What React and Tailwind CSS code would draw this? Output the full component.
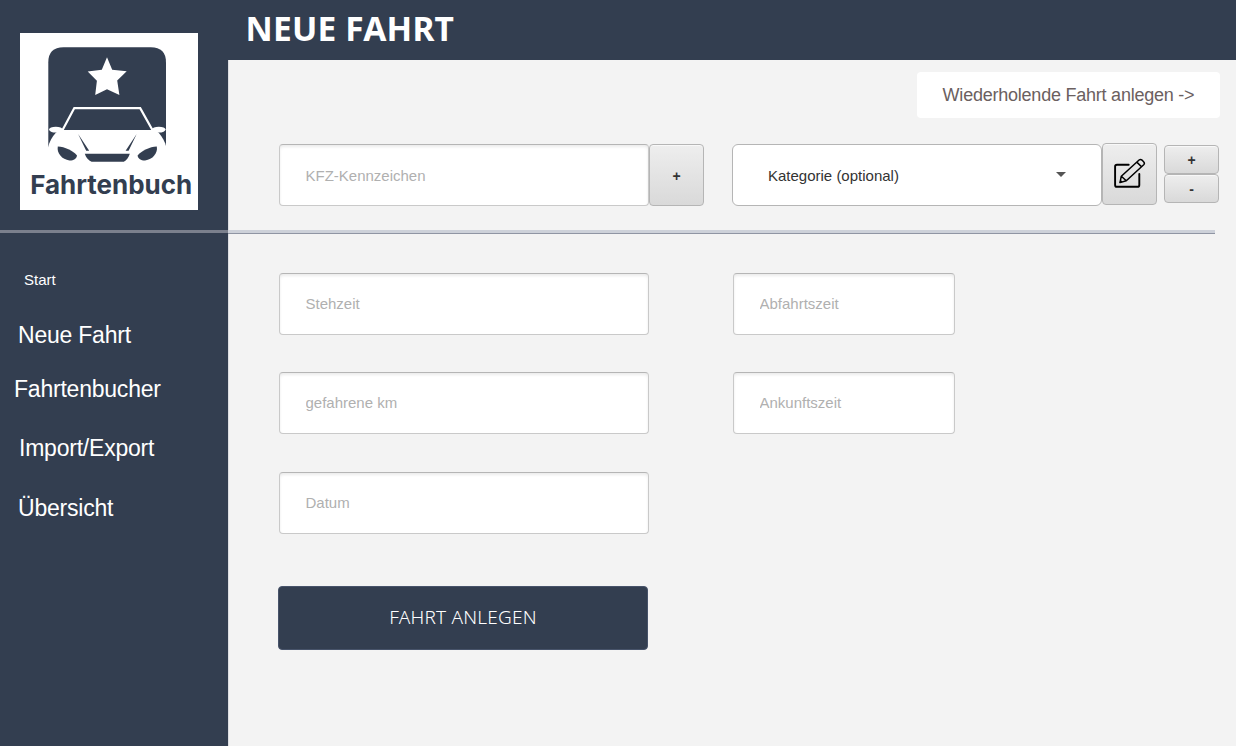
const NAVY = '#333e50';

function Logo() {
  return (
    <svg width="178" height="177" viewBox="0 0 178 177" className="block bg-white" role="img" aria-label="Fahrtenbuch">
      <path d="M28.3 116V29.5Q28.3 14.3 43.5 14.3H130.8Q146 14.3 146 29.5V116Z" fill={NAVY} />
      <path d="M87 24.3 92.2 36.8 106.7 38.2 97.2 47.4 99.4 61.9 87 56.2 75.2 61.9 76.9 47.7 67.7 38.4 81.8 36.8Z" fill="#fff" />
      <path d="M42.3 97.5 54.3 75.1H120.2L132.7 97.5" fill="none" stroke="#fff" strokeWidth="2.2" />
      <ellipse cx="35.8" cy="96.6" rx="6.8" ry="2.9" fill="#fff" />
      <ellipse cx="138.8" cy="96.6" rx="6.8" ry="2.9" fill="#fff" />
      <path d="M28 114.5C29.5 108.5 32 104 35.8 99.8L40 97H134.5L138.7 99.8C142.3 104 145 108.5 146.5 114.5V140H28Z" fill="#fff" />
      <path d="M58.1 101 69.2 117.8H66.2ZM116.7 101 105.6 117.8H108.6Z" fill={NAVY} />
      <path d="M37.8 113.6C45 114 52.5 117.5 57 122.5C56.5 126 53.5 127.6 49.5 127.5C42 126.8 36.5 120 37.8 113.6Z" fill={NAVY} />
      <path d="M136.8 113.6C129.6 114 122.1 117.5 117.6 122.5C118.1 126 121.1 127.6 125.1 127.5C132.6 126.8 138.1 120 136.8 113.6Z" fill={NAVY} />
      <path d="M64.8 120.8H109.8C108.5 125 106.5 127.5 103.8 128.8H71.6C68.5 127.5 66 125 64.8 120.8Z" fill={NAVY} />
      <text x="10.2" y="160.8" textLength="162" lengthAdjust="spacingAndGlyphs" fill={NAVY} className="font-['Inter'] text-[26px] font-bold">
        Fahrtenbuch
      </text>
    </svg>
  );
}

function EditIcon() {
  return (
    <svg width="33" height="32" viewBox="0 0 33 32" fill="none" stroke="#000" className="block">
      <path d="M15.7 6.7H4Q2.1 6.7 2.1 8.6V26.9Q2.1 28.8 4 28.8H24.3Q26.3 28.8 26.3 26.9V16" strokeWidth="1.9" strokeLinecap="round" />
      <path d="M7 24.6 8.3 18.2 26.1 2Q27.6.8 29 2.1L30.8 4Q32 5.4 30.7 6.7L13.3 22.8ZM8.3 18.2 13.3 22.8M23.8 4.1 28.5 8.8" strokeWidth="1.5" strokeLinejoin="round" />
      <path d="M6.5 25 7.4 21.8 9.8 24Z" fill="#000" stroke="none" />
    </svg>
  );
}

function Field({ label, className }) {
  return (
    <input
      aria-label={label}
      placeholder={label}
      className={`h-[62px] rounded-[4px] border border-[#c9c9c9] border-t-[#b5b5b5] bg-white px-[25.5px] text-[15px] text-[#333] shadow-[inset_0_2px_3px_rgba(0,0,0,0.08)] outline-none placeholder:text-[#b0b0b0] ${className}`}
    />
  );
}

function GrayButton({ children, className, label }) {
  return (
    <button
      aria-label={label}
      className={`flex items-center justify-center rounded-[4px] border border-[#b5b5b5] bg-linear-to-b from-[#eeeeee] to-[#d9d9d9] text-[14px] font-bold leading-none text-[#333] shadow-[inset_0_1px_0_#f8f8f8] ${className}`}
    >
      {children}
    </button>
  );
}

export default function App() {
  return (
    <div className="flex h-[746px] w-[1236px] overflow-hidden bg-[#f3f3f3] font-['Liberation_Sans',sans-serif]">
      <aside className="flex w-[228px] shrink-0 flex-col bg-[#333e50] text-white">
        <div className="h-[230px] pl-5 pt-[33px]">
          <Logo />
        </div>
        <div className="h-[3px] bg-[#7b808d]" />
        <nav className="flex flex-col items-start whitespace-nowrap text-[23px] leading-[28px] tracking-[-0.22px]">
          <a className="ml-6 mt-[37px] text-[15px] leading-5 tracking-normal">Start</a>
          <a className="ml-[18px] mt-[31px]">Neue Fahrt</a>
          <a className="ml-[14px] mt-[26px]">Fahrtenbucher</a>
          <a className="ml-[19px] mt-[31px]">Import/Export</a>
          <a className="ml-[18px] mt-[32px]">Übersicht</a>
        </nav>
      </aside>

      <main className="flex grow flex-col">
        <header className="h-[60px] bg-[#333e50] pl-[17.5px] pt-[6px]">
          <h1 className="font-['Noto_Sans',sans-serif] text-[33.5px] font-bold leading-[44px] tracking-[0.2px] text-white">NEUE FAHRT</h1>
        </header>

        <section className="flex h-[170px] flex-col border-l border-[#dcdee2]">
          <div className="flex justify-end pr-4 pt-3">
            <button className="h-[46px] w-[303px] whitespace-nowrap rounded-[4px] bg-white text-[18px] tracking-[-0.23px] text-[#6b6060]">
              Wiederholende Fahrt anlegen -&gt;
            </button>
          </div>
          <div className="flex items-start pl-[50px] pt-[26px]">
            <Field label="KFZ-Kennzeichen" className="w-[370px]" />
            <GrayButton className="h-[62px] w-[55px] pt-px">+</GrayButton>
            <button className="ml-[28px] flex h-[62px] w-[370px] items-center justify-between rounded-[6px] border border-[#b5b5b5] bg-white pl-[35px] pr-[35px] pt-[2px] text-[15px] text-[#333]">
              Kategorie (optional)
              <svg width="10" height="5" viewBox="0 0 10 5" className="mb-[3px]">
                <path d="M0 0H10L5 5Z" fill="#555" />
              </svg>
            </button>
            <GrayButton label="Kategorie bearbeiten" className="-mt-px h-[62px] w-[55px]">
              <EditIcon />
            </GrayButton>
            <div className="ml-[7px] mt-px flex flex-col">
              <GrayButton className="h-[29px] w-[55px]">+</GrayButton>
              <GrayButton className="h-[29px] w-[55px]">-</GrayButton>
            </div>
          </div>
        </section>

        <div className="mr-[21px] h-1 shrink-0 border-b border-[#8f95a3] bg-[#cdd1d9]" />

        <section className="flex grow flex-col items-start border-l border-[#dcdee2] pl-[50px] pt-[39px]">
          <div className="flex gap-[84px]">
            <div className="flex flex-col">
              <Field label="Stehzeit" className="w-[370px] pb-[2px]" />
              <Field label="gefahrene km" className="mt-[37px] w-[370px] pb-[2px]" />
              <Field label="Datum" className="mt-[38px] w-[370px] pb-[2px]" />
            </div>
            <div className="flex flex-col gap-[37px]">
              <Field label="Abfahrtszeit" className="w-[222px] pb-[2px]" />
              <Field label="Ankunftszeit" className="w-[222px] pb-[2px]" />
            </div>
          </div>
          <button className="-ml-px mt-[52px] h-[64px] w-[370px] rounded-[4px] border border-[#47536a] bg-[#333e50] pb-px font-['Noto_Sans',sans-serif] text-[19px] font-[350] tracking-[0.2px] text-white">
            FAHRT ANLEGEN
          </button>
        </section>
      </main>
    </div>
  );
}
